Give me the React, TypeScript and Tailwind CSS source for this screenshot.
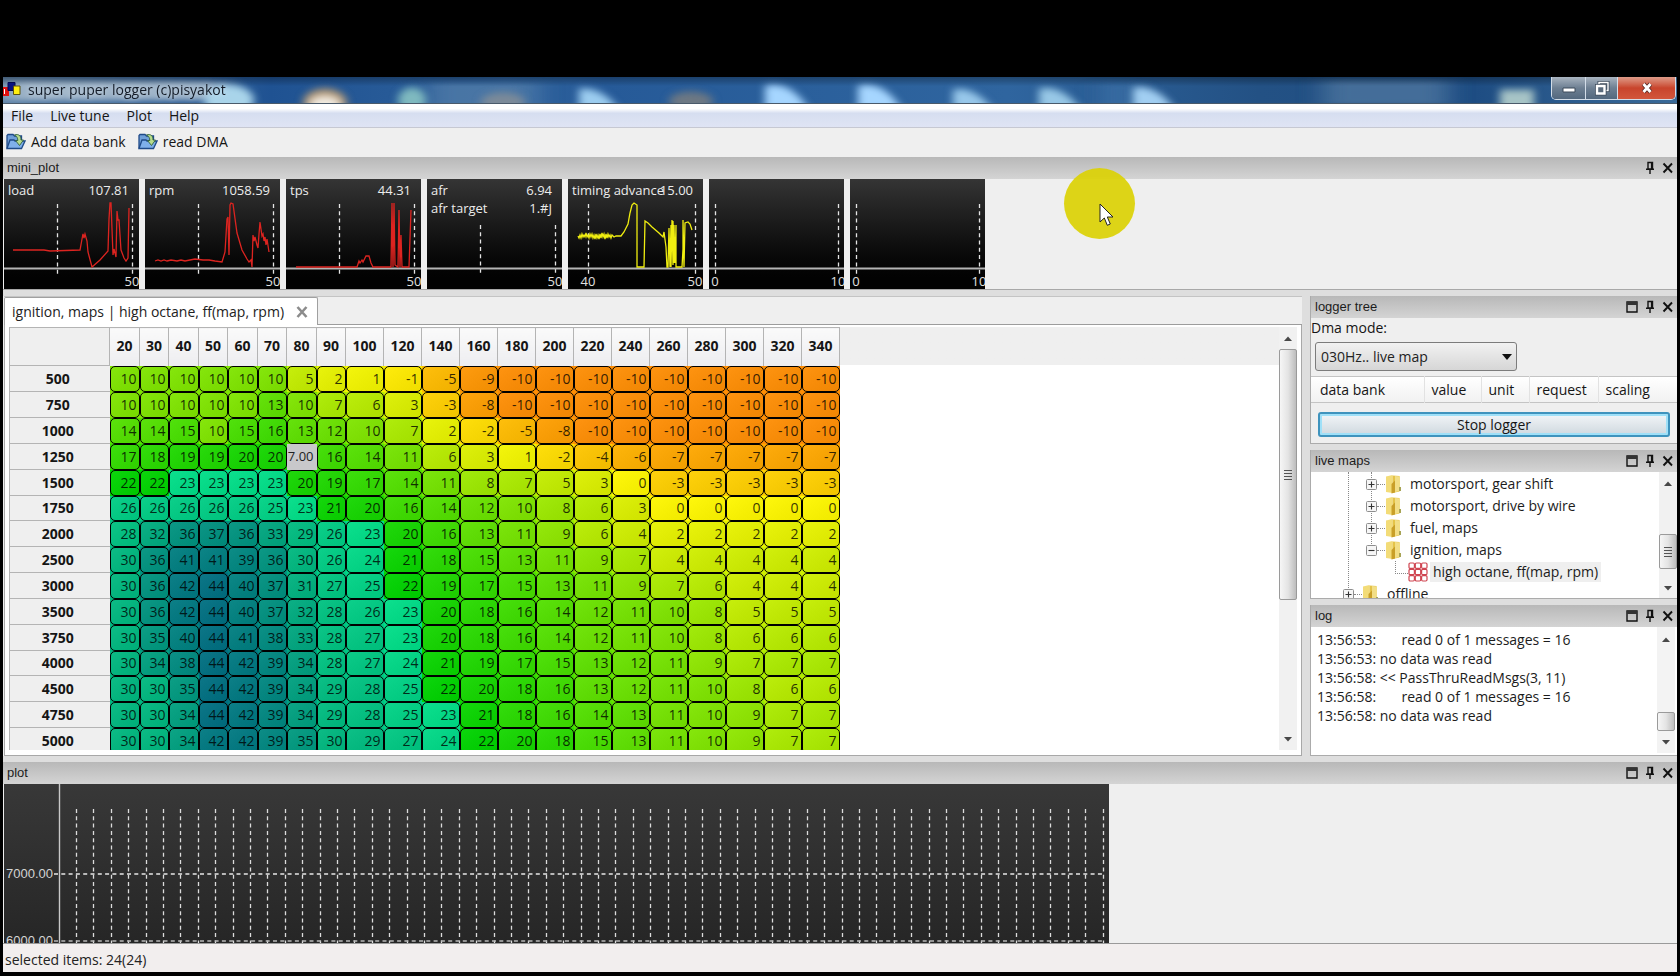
import React from "react";

const LOADS = [20, 30, 40, 50, 60, 70, 80, 90, 100, 120, 140, 160, 180, 200, 220, 240, 260, 280, 300, 320, 340];

const ROWS: { rpm: number; cells: number[] }[] = [
  { rpm: 500, cells: [10, 10, 10, 10, 10, 10, 5, 2, 1, -1, -5, -9, -10, -10, -10, -10, -10, -10, -10, -10, -10] },
  { rpm: 750, cells: [10, 10, 10, 10, 10, 13, 10, 7, 6, 3, -3, -8, -10, -10, -10, -10, -10, -10, -10, -10, -10] },
  { rpm: 1000, cells: [14, 14, 15, 10, 15, 16, 13, 12, 10, 7, 2, -2, -5, -8, -10, -10, -10, -10, -10, -10, -10] },
  { rpm: 1250, cells: [17, 18, 19, 19, 20, 20, 17, 16, 14, 11, 6, 3, 1, -2, -4, -6, -7, -7, -7, -7, -7] },
  { rpm: 1500, cells: [22, 22, 23, 23, 23, 23, 20, 19, 17, 14, 11, 8, 7, 5, 3, 0, -3, -3, -3, -3, -3] },
  { rpm: 1750, cells: [26, 26, 26, 26, 26, 25, 23, 21, 20, 16, 14, 12, 10, 8, 6, 3, 0, 0, 0, 0, 0] },
  { rpm: 2000, cells: [28, 32, 36, 37, 36, 33, 29, 26, 23, 20, 16, 13, 11, 9, 6, 4, 2, 2, 2, 2, 2] },
  { rpm: 2500, cells: [30, 36, 41, 41, 39, 36, 30, 26, 24, 21, 18, 15, 13, 11, 9, 7, 4, 4, 4, 4, 4] },
  { rpm: 3000, cells: [30, 36, 42, 44, 40, 37, 31, 27, 25, 22, 19, 17, 15, 13, 11, 9, 7, 6, 4, 4, 4] },
  { rpm: 3500, cells: [30, 36, 42, 44, 40, 37, 32, 28, 26, 23, 20, 18, 16, 14, 12, 11, 10, 8, 5, 5, 5] },
  { rpm: 3750, cells: [30, 35, 40, 44, 41, 38, 33, 28, 27, 23, 20, 18, 16, 14, 12, 11, 10, 8, 6, 6, 6] },
  { rpm: 4000, cells: [30, 34, 38, 44, 42, 39, 34, 28, 27, 24, 21, 19, 17, 15, 13, 12, 11, 9, 7, 7, 7] },
  { rpm: 4500, cells: [30, 30, 35, 44, 42, 39, 34, 29, 28, 25, 22, 20, 18, 16, 13, 12, 11, 10, 8, 6, 6] },
  { rpm: 4750, cells: [30, 30, 34, 44, 42, 39, 34, 29, 28, 25, 23, 21, 18, 16, 14, 13, 11, 10, 9, 7, 7] },
  { rpm: 5000, cells: [30, 30, 34, 42, 42, 39, 35, 30, 29, 27, 24, 22, 20, 18, 15, 13, 11, 10, 9, 7, 7] },
];

const STOPS: [number, number[]][] = [
  [-10, [255, 142, 4]],
  [-7, [255, 168, 0]],
  [-3, [255, 208, 0]],
  [0, [255, 248, 0]],
  [3, [220, 240, 0]],
  [7, [172, 236, 0]],
  [10, [128, 230, 0]],
  [15, [72, 224, 0]],
  [22, [0, 212, 0]],
  [23, [0, 222, 136]],
  [30, [0, 184, 128]],
  [36, [0, 148, 128]],
  [44, [0, 112, 130]],
];

function heat(v: number): string {
  for (let i = 1; i < STOPS.length; i++) {
    const [hi, b] = STOPS[i];
    const [lo, a] = STOPS[i - 1];
    if (v <= hi) {
      const t = (v - lo) / (hi - lo);
      return `rgb(${a.map((c, k) => Math.round(c + (b[k] - c) * t)).join(",")})`;
    }
  }
  return "rgb(0,112,130)";
}

function MaxIcon() {
  return (
    <svg width="12" height="12" viewBox="0 0 12 12" aria-hidden="true">
      <path d="M1 1h10v10H1z" fill="none" stroke="#111" strokeWidth="1.4" />
      <path d="M1 2.5h10" stroke="#333" strokeWidth="3" />
    </svg>
  );
}

function PinIcon() {
  return (
    <svg width="10" height="14" viewBox="0 0 10 14" aria-hidden="true">
      <path d="M3 1.5h4.500v6.500H3zM1 8.200h8M5 8.500v4.500" fill="none" stroke="#111" strokeWidth="1.4" />
      <path d="M6.700 1.500v6.500" stroke="#111" strokeWidth="1.600" />
    </svg>
  );
}

function CloseIcon() {
  return (
    <svg width="12" height="12" viewBox="0 0 12 12" aria-hidden="true">
      <path d="M1.500 1.500l8.500 9M10 1.500l-8.500 9" fill="none" stroke="#111" strokeWidth="1.9" />
    </svg>
  );
}

function Caption({ title, max = true }: { title: string; max?: boolean }) {
  return (
    <div className="flex h-[22px] shrink-0 items-center justify-between bg-linear-to-b from-[#b8b8b8] to-[#d4d4d4] pr-[3px] pb-px pl-1 font-['Liberation_Sans',sans-serif] text-[13px] leading-4 text-[#1c1c1c]">
      <h2>{title}</h2>
      <div className="flex items-center gap-[7px]">
        {max && (
          <button type="button" aria-label={"Maximize " + title}>
            <MaxIcon />
          </button>
        )}
        <button type="button" aria-label={"Pin " + title}>
          <PinIcon />
        </button>
        <button type="button" aria-label={"Close " + title}>
          <CloseIcon />
        </button>
      </div>
    </div>
  );
}

function TitleGlass() {
  return (
    <svg className="absolute inset-0 h-full w-full" preserveAspectRatio="none" viewBox="0 0 1674 27" aria-hidden="true">
      <defs>
        <filter id="soft" x="-30%" y="-60%" width="160%" height="220%">
          <feGaussianBlur stdDeviation="4" />
        </filter>
        <filter id="softer" x="-30%" y="-100%" width="160%" height="300%">
          <feGaussianBlur stdDeviation="12 3" />
        </filter>
        <linearGradient id="glass" x1="0" y1="0" x2="1" y2="0">
          <stop offset="0" stopColor="#5f83a8" />
          <stop offset="0.16" stopColor="#1f5292" />
          <stop offset="0.3" stopColor="#2f629c" />
          <stop offset="0.36" stopColor="#265a98" />
          <stop offset="0.6" stopColor="#2f659f" />
          <stop offset="0.75" stopColor="#235184" />
          <stop offset="0.88" stopColor="#1e4d83" />
          <stop offset="1" stopColor="#3a6a98" />
        </linearGradient>
        <linearGradient id="shade" x1="0" y1="0" x2="0" y2="1">
          <stop offset="0" stopColor="#000" stopOpacity="0.3" />
          <stop offset="0.35" stopColor="#000" stopOpacity="0" />
        </linearGradient>
      </defs>
      <rect width="1674" height="27" fill="url(#glass)" />
      <g filter="url(#softer)">
        <rect x="0" y="4" width="220" height="20" fill="#a9bccc" opacity="0.85" />
        <rect x="425" y="6" width="110" height="26" fill="#5a83ac" opacity="0.6" />
        <rect x="1320" y="3" width="125" height="26" fill="#6286ab" opacity="0.55" />
        <rect x="1100" y="6" width="30" height="26" fill="#3f74aa" opacity="0.7" />
      </g>
      <g filter="url(#soft)">
        <ellipse cx="226" cy="24" rx="25" ry="16" fill="#a9d4ea" />
        <ellipse cx="322" cy="27" rx="22" ry="15" fill="#b79a72" />
        <ellipse cx="322" cy="29" rx="15" ry="9" fill="#f2ece2" />
        <ellipse cx="409" cy="24" rx="14" ry="13" fill="#7fb9bf" />
        <ellipse cx="500" cy="26" rx="22" ry="10" fill="#7b8a99" />
        <path d="M576 34V12q24 -2 40 22z" fill="#9ccdf0" />
        <ellipse cx="688" cy="25" rx="22" ry="10" fill="#6d7883" />
        <path d="M762 34V9q26 -6 44 25z" fill="#a6d6ff" />
        <path d="M855 34V9q26 -6 44 25z" fill="#a6d6ff" />
        <path d="M950 34V13q22 -4 40 21z" fill="#98c8ea" />
        <path d="M1036 34V12q24 -4 42 22z" fill="#98c8e6" />
        <path d="M1130 34V11q24 -4 42 23z" fill="#a2cff2" />
        <rect x="1497" y="13" width="34" height="24" fill="#a7c4c6" />
      </g>
      <rect width="1674" height="27" fill="url(#shade)" />
    </svg>
  );
}

function TitleBar() {
  return (
    <header className="relative flex h-[27px] shrink-0 items-start justify-between overflow-hidden border-b border-[#4a5a6a]">
      <TitleGlass />
      <div className="relative flex h-[26px] items-center gap-[7px]">
        <svg width="18" height="18" viewBox="0 0 18 18" aria-hidden="true">
          <path d="M0 6h6v9H0z" fill="#e01010" />
          <path d="M1.500 8v5" stroke="#fff" strokeWidth="1" />
          <path d="M5 1.500h7v8H5z" fill="#0a1480" stroke="#050a50" />
          <path d="M10.500 5h6.500v8.500h-6.500z" fill="#ffee10" stroke="#5a5210" />
        </svg>
        <h1 className="text-[14px] leading-5 text-[#141c28] [text-shadow:0_0_6px_#ffffffb0]">super puper logger (c)pisyakot</h1>
      </div>
      <div className="relative mr-px flex h-[23px] overflow-hidden rounded-b-[5px] border border-t-0 border-[#d3dde8]">
        <button type="button" aria-label="Minimize" className="flex w-[34px] items-center justify-center border-r border-[#d3dde8] bg-linear-to-b from-[#a9b4c0] via-[#6d7f92] to-[#53687e]">
          <svg width="14" height="6" viewBox="0 0 14 6" className="mt-1" aria-hidden="true">
            <path d="M1 1h12v4H1z" fill="#fff" stroke="#3c4a5a" strokeWidth="1" />
          </svg>
        </button>
        <button type="button" aria-label="Restore" className="flex w-8 items-center justify-center border-r border-[#d3dde8] bg-linear-to-b from-[#a9b4c0] via-[#6d7f92] to-[#53687e]">
          <svg width="16" height="15" viewBox="0 0 16 15" aria-hidden="true">
            <path d="M5 3.500V1.500h9v8h-2" fill="none" stroke="#3c4a5a" strokeWidth="3" />
            <path d="M5 3.500V1.500h9v8h-2" fill="none" stroke="#fff" strokeWidth="1.400" />
            <path d="M3 5h7.500v7.500H3z" fill="#5b6b7c" stroke="#3c4a5a" strokeWidth="4" />
            <path d="M3 5h7.500v7.500H3z" fill="#5b6b7c" stroke="#fff" strokeWidth="2.400" />
          </svg>
        </button>
        <button type="button" aria-label="Close" className="flex w-[57px] items-center justify-center bg-linear-to-b from-[#dd9a88] via-[#c8442c] to-[#d2563c]">
          <svg width="16" height="14" viewBox="0 0 16 14" aria-hidden="true">
            <path d="M4.500 3l7 8M11.500 3l-7 8" fill="none" stroke="#5a2a24" strokeWidth="4.500" />
            <path d="M4.500 3l7 8M11.500 3l-7 8" fill="none" stroke="#fff" strokeWidth="2.800" />
          </svg>
        </button>
      </div>
    </header>
  );
}

function MenuBar() {
  return (
    <nav className="flex h-6 shrink-0 items-center gap-[17px] border-b border-[#c6c8d2] bg-linear-to-b from-[#ffffff] from-20% via-[#d6def0] via-40% to-[#dfe4f4] pl-2 text-[14px] leading-5">
      <button type="button">File</button>
      <button type="button">Live tune</button>
      <button type="button">Plot</button>
      <button type="button">Help</button>
    </nav>
  );
}

function OpenIcon() {
  return (
    <svg width="20" height="17" viewBox="0 0 20 17" aria-hidden="true">
      <path d="M1 15.500V2.500l1-1h5l1.500 1.500h7v4" fill="#6f9fd8" stroke="#1f4a88" strokeWidth="1.300" />
      <path d="M1 15.500l3-8.500h4l1 1h10l-3.500 7.500z" fill="#7fb0ea" stroke="#1f4a88" strokeWidth="1.300" />
      <path d="M8.500 2c4.500-1.500 6.500 1 6.500 5h2.500L13.500 12.500 9.500 7.500h2.300c0-2.500-.8-4-3.300-5.500z" fill="#b6dc8c" stroke="#2f5f3e" strokeWidth="0.900" />
    </svg>
  );
}

function ToolBar() {
  return (
    <div className="flex h-[29px] shrink-0 items-center gap-3 bg-[#efefef] pb-[2px] pl-[3px] text-[14px] leading-5">
      <button type="button" className="flex items-center gap-[5px]">
        <OpenIcon />
        Add data bank
      </button>
      <button type="button" className="flex items-center gap-[5px]">
        <OpenIcon />
        read DMA
      </button>
    </div>
  );
}

type Mini = {
  lines: [string, string][];
  ticks: [number, string][];
  top: number;
  color?: string;
  points?: string;
};

const MINIS: Mini[] = [
  {
    lines: [["load", "107.81"]],
    ticks: [[53, ""], [128, "50"]],
    top: 25,
    color: "#dc2420",
    points:
      "9,71 40,71 46,72 76,71 78,60 79,55 80,59 81,55 83,62 84,73 88,88 96,81 104,72 105,40 106,24 107,24 109,76 110,70 112,78 113,32 114,41 115,41 117,71 120,79 122,82 124,79 125,29",
  },
  {
    lines: [["rpm", "1058.59"]],
    ticks: [[53, ""], [128, "50"]],
    top: 25,
    color: "#dc2420",
    points:
      "10,82 13,81 16,82 19,81 22,82 26,81 32,82 36,81 40,82 45,81 50,80 58,81 64,81 70,82 77,83 80,73 82,40 83,38 84,76 85,26 86,24 88,25 92,54 97,71 102,80 104,83 106,81 107,88 108,56 109,62 110,58 112,66 113,69 114,55 115,43 117,57 118,55 119,62 120,58 121,66 122,60 124,73",
  },
  {
    lines: [["tps", "44.31"]],
    ticks: [[53, ""], [128, "50"]],
    top: 25,
    color: "#dc2420",
    points:
      "10,88 71,88 73,82 74,84 76,81 77,83 80,77 83,77 85,84 87,88 105,88 106,24 107,88 108,24 109,86 112,88 113,31 114,88 115,56 116,88 123,88 125,31",
  },
  { lines: [["afr", "6.94"], ["afr target", "1.#J"]], ticks: [[53, ""], [128, "50"]], top: 46 },
  {
    lines: [["timing advance", "15.00"]],
    ticks: [[20, "40"], [127, "50"]],
    top: 25,
    color: "#f0ee10",
    points:
      "10,57 11,59 12,56 13,59 14,55 15,58 16,56 17,58 18,54 19,58 20,56 21,59 22,55 23,58 24,55 25,59 26,56 27,60 28,55 29,59 30,56 31,60 32,55 33,59 34,54 35,58 36,55 37,60 38,55 39,59 40,55 41,58 42,56 43,59 44,56 46,58 48,57 53,57 56,53 60,45 62,34 64,26 66,24 69,26 69,88 76,88 77,42 80,44 84,48 91,54 95,58 96,53 98,68 99,88 100,88 101,49 102,88 103,46 103,88 104,41 105,86 105,42 106,84 106,46 107,84 108,46 108,88 114,88 115,70 115,41 116,88 117,44 120,43 122,45 124,51",
  },
  { lines: [], ticks: [[6, "0"], [129, "10"]], top: 25 },
  { lines: [], ticks: [[6, "0"], [129, "10"]], top: 25 },
];

function MiniPlot({ m }: { m: Mini }) {
  return (
    <div className="relative h-[110px] w-[135px] overflow-hidden bg-linear-to-b from-[#353535] to-[#020202] to-90%">
      <svg className="absolute inset-0" width="135" height="110" viewBox="0 0 135 110" aria-hidden="true">
        {m.ticks.map(([x]) => (
          <path key={x} d={`M${x + 0.5} ${m.top}V95`} stroke="#e4e4e4" strokeWidth="1.300" strokeDasharray="4 3.300" />
        ))}
        <path d="M0 89.500H135" stroke="#b4b4b4" strokeWidth="1.800" />
        {m.points && <polyline points={m.points} fill="none" stroke={m.color} strokeWidth="1.300" />}
        {m.ticks.map(([x, label]) => (
          <text key={x} x={x} y="107" textAnchor="middle" fontSize="13" fill="#e0e0e0">
            {label}
          </text>
        ))}
      </svg>
      <dl className="relative pt-[2px] text-[13px] leading-[18px] text-[#ececec]">
        {m.lines.map(([name, value]) => (
          <div key={name} className="relative h-[18px] px-1 whitespace-nowrap">
            <dt>{name}</dt>
            <dd className="absolute top-0 right-[10px]">{value}</dd>
          </div>
        ))}
      </dl>
    </div>
  );
}

function Arrow({ up = false }: { up?: boolean }) {
  return (
    <svg width="8" height="5" viewBox="0 0 8 5" aria-hidden="true">
      <path d={up ? "M0 5L4 0.500L8 5z" : "M0 0L4 4.500L8 0z"} fill="#484848" />
    </svg>
  );
}

function Grip() {
  return (
    <span className="flex flex-col gap-[2px]">
      <span className="h-px w-2 bg-[#555]" />
      <span className="h-px w-2 bg-[#555]" />
      <span className="h-px w-2 bg-[#555]" />
      <span className="h-px w-2 bg-[#555]" />
    </span>
  );
}

const thumb = "flex shrink-0 items-center justify-center rounded-[2px] border border-[#9a9a9a] bg-linear-to-r from-[#f6f6f6] via-[#e4e4e4] to-[#bdbdbd]";

function MapTable() {
  return (
    <table className="w-[830px] table-fixed border-collapse text-[14px]">
      <colgroup>
        <col className="w-[100px]" />
        {LOADS.map((l, i) => (
          <col key={l} className={i > 7 ? "w-[38px]" : i % 2 ? "w-[29px]" : "w-[30px]"} />
        ))}
      </colgroup>
      <thead>
        <tr className="h-[38px]">
          <th className="border-t border-r border-b border-l border-[#b4b4b4] bg-[#efefef] p-0" aria-label="rpm / load" />
          {LOADS.map((l) => (
            <th key={l} scope="col" className="border-t border-r border-[#b4b4b4] bg-linear-to-b from-[#fafafa] to-[#ededf0] p-0 pb-[2px] leading-5 font-bold">
              {l}
            </th>
          ))}
        </tr>
      </thead>
      <tbody>
        {ROWS.map((r, ri) => (
          <tr key={r.rpm} className={ri % 6 === 5 ? "h-[25px]" : "h-[26px]"}>
            <th scope="row" className="border-b border-l border-[#b4b4b4] bg-[#efefef] p-0 pr-1 leading-5 font-bold">
              {r.rpm}
            </th>
            {r.cells.map((v, ci) =>
              r.rpm === 1250 && LOADS[ci] === 80 ? (
                <td key={ci} className="h-[inherit] bg-[#c8c8ca] p-0 align-top">
                  <input
                    aria-label="1250 rpm, load 80"
                    defaultValue="7.00"
                    className="block h-6 w-full bg-transparent pr-[3px] text-right text-[13px] leading-6 text-[#222] outline-none"
                  />
                </td>
              ) : (
                <td key={ci} className="h-[inherit] p-0" style={{ backgroundColor: heat(v) }}>
                  <div className="flex h-full items-center justify-end rounded-[5px] border border-black bg-linear-to-br from-white/5 to-black/5 pr-[2px] leading-5 text-black/80">
                    {v}
                  </div>
                </td>
              ),
            )}
          </tr>
        ))}
      </tbody>
    </table>
  );
}

function MapPanel() {
  return (
    <main className="flex min-w-0 flex-1 flex-col bg-[#efefef] pl-px">
      <div className="flex h-[29px] shrink-0 items-stretch border-t border-[#c4c4c4]">
        <div className="flex items-center gap-3 rounded-t-[2px] border border-b-0 border-[#a0a0a0] bg-white pr-[9px] pl-[7px] text-[14px] leading-5 text-[#222]">
          ignition, maps | high octane, ff(map, rpm)
          <button type="button" aria-label="Close tab">
            <svg width="12" height="12" viewBox="0 0 12 12" aria-hidden="true">
              <path d="M1.500 1l9 10M10.500 1l-9 10" stroke="#8c8c8c" strokeWidth="2.600" fill="none" />
            </svg>
          </button>
        </div>
        <div className="flex-1 border-b border-[#9c9c9c]" />
      </div>
      <div className="flex min-h-0 flex-1 border-r border-b border-l border-[#a8a8a8] bg-white pt-[2px] pr-1 pb-[5px] pl-1">
        <div className="min-w-0 flex-1 overflow-hidden">
          <div className="bg-linear-to-b from-[#efefef] from-[38px] to-white to-[38px]">
            <MapTable />
          </div>
        </div>
        <div className="flex w-[18px] shrink-0 flex-col items-center bg-[#f1f1f1]">
          <div className="flex h-[22px] items-center">
            <Arrow up />
          </div>
          <div className={thumb + " h-[251px] w-full"}>
            <Grip />
          </div>
          <div className="flex-1" />
          <div className="flex h-[21px] items-center">
            <Arrow />
          </div>
        </div>
      </div>
    </main>
  );
}

function LoggerTree() {
  return (
    <section className="flex shrink-0 flex-col border-b border-l border-[#ababab] bg-[#efefef]">
      <Caption title="logger tree" />
      <label htmlFor="dma" className="text-[14px] leading-5">
        Dma mode:
      </label>
      <div className="relative mt-1 ml-1 w-[202px]">
        <select
          id="dma"
          className="block h-[29px] w-full appearance-none rounded-[3px] border border-[#7c7c7c] bg-linear-to-b from-[#f2f2f2] to-[#d6d6d6] pl-[5px] text-[14px] leading-5 text-[#222]"
        >
          <option>030Hz.. live map</option>
        </select>
        <svg className="pointer-events-none absolute top-3 right-[5px]" width="10" height="6" viewBox="0 0 10 6" aria-hidden="true">
          <path d="M0 0h10L5 6z" fill="#111" />
        </svg>
      </div>
      <table className="mt-[5px] w-full table-fixed border-y border-[#c4c4c4] text-[14px] leading-5">
        <thead>
          <tr className="h-[26px] bg-linear-to-b from-white to-[#f1f1f1] text-left">
            <th className="w-[113px] border-r border-[#e2e2e2] p-0 pl-[9px] font-normal">data bank</th>
            <th className="w-[57px] border-r border-[#e2e2e2] p-0 pl-[7px] font-normal">value</th>
            <th className="w-[48px] border-r border-[#e2e2e2] p-0 pl-[7px] font-normal">unit</th>
            <th className="w-[69px] border-r border-[#e2e2e2] p-0 pl-[7px] font-normal">request</th>
            <th className="p-0 pl-[7px] font-normal">scaling</th>
          </tr>
        </thead>
      </table>
      <button
        type="button"
        className="mx-[7px] mt-[9px] mb-[6px] h-[25px] rounded-[3px] border-2 border-[#3f93bd] bg-linear-to-b from-[#f3f6f8] to-[#cfd8df] text-[14px] leading-5 shadow-[inset_0_0_0_2px_#9fe0f8]"
      >
        Stop logger
      </button>
    </section>
  );
}

function Folder() {
  return (
    <svg width="17" height="20" viewBox="0 0 17 20" aria-hidden="true">
      <path d="M1 2.500L7.500 1v18L1 18z" fill="#f3dc78" />
      <path d="M7.500 1.500L14.500 2v15.500l-7 1.500z" fill="#e4c348" />
      <path d="M10 2l5 0.500v14.500l-5 1z" fill="#f2de86" />
      <path d="M6.500 10l3.500-3.500v12L6.500 19.500z" fill="#c99f28" />
      <path d="M14 13h2v4h-2z" fill="#a8a456" />
    </svg>
  );
}

function Expander({ open = false }: { open?: boolean }) {
  return (
    <svg width="11" height="11" viewBox="0 0 11 11" aria-hidden="true">
      <rect x="0.500" y="0.500" width="10" height="10" rx="1" fill="#f6f6f6" stroke="#8e8e8e" />
      <path d={open ? "M2.500 5.500h6" : "M2.500 5.500h6M5.500 2.500v6"} stroke="#333" strokeWidth="1.100" />
    </svg>
  );
}

function TreeItem({ label, open, pad }: { label: string; open?: boolean; pad: string }) {
  return (
    <li className={"flex h-[22px] items-center " + pad}>
      <Expander open={open} />
      <span className="w-2 border-t border-dotted border-[#888]" />
      <Folder />
      <span className="pl-2">{label}</span>
    </li>
  );
}

function LiveMaps() {
  return (
    <section className="flex h-[149px] shrink-0 flex-col border-b border-l border-[#ababab] bg-white">
      <Caption title="live maps" />
      <div className="flex min-h-0 flex-1">
        <ul className="relative min-w-0 flex-1 overflow-hidden pt-px text-[14px] leading-5 text-[#1c1c1c]">
          <li aria-hidden="true" className="absolute top-0 left-[37px] h-[116px] border-l border-dotted border-[#888]" />
          <li aria-hidden="true" className="absolute top-0 left-[60px] h-[72px] border-l border-dotted border-[#888]" />
          <TreeItem label="motorsport, gear shift" pad="relative pl-[55px]" />
          <TreeItem label="motorsport, drive by wire" pad="relative pl-[55px]" />
          <TreeItem label="fuel, maps" pad="relative pl-[55px]" />
          <TreeItem label="ignition, maps" open pad="relative pl-[55px]" />
          <li className="flex h-[22px] items-center pl-[84px]">
            <span className="mb-[9px] h-[13px] w-[13px] border-b border-l border-dotted border-[#888]" />
            <svg width="20" height="20" viewBox="0 0 20 20" aria-hidden="true">
              {[0, 1, 2].map((r) =>
                [0, 1, 2].map((c) => (
                  <rect key={r + "-" + c} x={1 + c * 6.3} y={1 + r * 6.3} width="5.400" height="5.400" rx="1.200" fill="#fff" stroke="#cf4450" strokeWidth="1.200" />
                )),
              )}
            </svg>
            <span className="ml-[2px] bg-[#efefef] px-[3px]">high octane, ff(map, rpm)</span>
          </li>
          <TreeItem label="offline" pad="relative pl-8" />
        </ul>
        <div className="flex w-[18px] shrink-0 flex-col items-center bg-[#f1f1f1]">
          <div className="flex h-[22px] items-center">
            <Arrow up />
          </div>
          <div className="h-10" />
          <div className={thumb + " h-[35px] w-full"}>
            <Grip />
          </div>
          <div className="flex-1" />
          <div className="flex h-5 items-center">
            <Arrow />
          </div>
        </div>
      </div>
    </section>
  );
}

const LOG: [string, string][] = [
  ["13:56:53:", "       read 0 of 1 messages = 16"],
  ["13:56:53:", " no data was read"],
  ["13:56:58:", " << PassThruReadMsgs(3, 11)"],
  ["13:56:58:", "       read 0 of 1 messages = 16"],
  ["13:56:58:", " no data was read"],
];

function LogPanel() {
  return (
    <section className="flex min-h-0 flex-1 flex-col border-b border-l border-[#ababab] bg-white">
      <Caption title="log" />
      <div className="flex min-h-0 flex-1 pr-[2px] pb-[2px]">
        <ol className="min-w-0 flex-1 overflow-hidden pt-[3px] pl-[6px] text-[14px] leading-[19px] whitespace-pre text-[#1c1c1c]">
          {LOG.map(([t, s], i) => (
            <li key={i}>
              <time>{t}</time>
              {s}
            </li>
          ))}
        </ol>
        <div className="flex w-[18px] shrink-0 flex-col items-center bg-[#f3f3f3]">
          <div className="flex h-6 items-center">
            <Arrow up />
          </div>
          <div className="flex-1" />
          <div className={thumb + " h-[19px] w-full"} />
          <div className="flex h-[22px] items-center">
            <Arrow />
          </div>
        </div>
      </div>
    </section>
  );
}

function BigPlot() {
  const xs = Array.from({ length: 60 }, (_, i) => Math.round(72 + i * 17.4) + 0.5);
  return (
    <svg width="1105" height="159" viewBox="0 0 1105 159" role="img" aria-label="plot" className="block">
      <defs>
        <linearGradient id="plotbg" x1="0" y1="0" x2="0" y2="1">
          <stop offset="0" stopColor="#383838" />
          <stop offset="1" stopColor="#262626" />
        </linearGradient>
      </defs>
      <rect width="1105" height="159" fill="url(#plotbg)" />
      {xs.map((x) => (
        <path key={x} d={`M${x} 25V159`} stroke="#dcdcdc" strokeWidth="1.300" strokeDasharray="4 3.300" />
      ))}
      <path d="M50 90H1100" stroke="#e8e8e8" strokeWidth="1.400" strokeDasharray="4 3.300" />
      <path d="M50 157H1100" stroke="#b8b8b8" strokeWidth="1.600" strokeDasharray="4 3.300" />
      <path d="M55.500 0V159" stroke="#c8c8c8" strokeWidth="1.400" />
      <g fontFamily="'Liberation Sans', sans-serif" fontSize="13" fill="#d4d4d4" textAnchor="end">
        <text x="49" y="94">7000.00</text>
        <text x="49" y="161">6000.00</text>
      </g>
    </svg>
  );
}

function Pointer() {
  return (
    <div className="pointer-events-none absolute top-[168px] left-[1064px] h-[71px] w-[71px] rounded-full bg-[#dcd200]/90" aria-hidden="true">
      <svg className="absolute top-[35px] left-[35px]" width="15" height="24" viewBox="0 0 15 24">
        <path d="M1 1v18l4.300-4 3 7.300 3-1.300-3-7H14z" fill="#fff" stroke="#222" strokeWidth="1" />
      </svg>
    </div>
  );
}

export default function App() {
  return (
    <div className="relative flex h-screen flex-col bg-black px-[3px] pt-[77px] pb-1 font-['Open_Sans','Noto_Sans',sans-serif] text-[#151515]">
      <div className="flex min-h-0 flex-1 flex-col bg-[#dedede]">
        <TitleBar />
        <MenuBar />
        <ToolBar />
        <section className="shrink-0 border-b border-[#a8a8a8] bg-[#efefef]">
          <Caption title="mini_plot" max={false} />
          <div className="flex gap-[6px] overflow-hidden pl-px">
            {MINIS.map((m, i) => (
              <MiniPlot key={i} m={m} />
            ))}
          </div>
        </section>
        <div className="flex min-h-0 flex-1 gap-2 pt-[6px] pb-[6px]">
          <MapPanel />
          <aside className="flex w-[367px] shrink-0 flex-col gap-[6px]">
            <LoggerTree />
            <LiveMaps />
            <LogPanel />
          </aside>
        </div>
        <section className="shrink-0 border-b border-[#9a9a9a] bg-[#efefef]">
          <Caption title="plot" />
          <div className="overflow-hidden pl-px">
            <BigPlot />
          </div>
        </section>
        <footer className="flex h-7 shrink-0 items-center bg-[#f2eeee] pt-[3px] pl-[2px] text-[14px] leading-5 text-[#222]">selected items: 24(24)</footer>
      </div>
      <Pointer />
    </div>
  );
}
